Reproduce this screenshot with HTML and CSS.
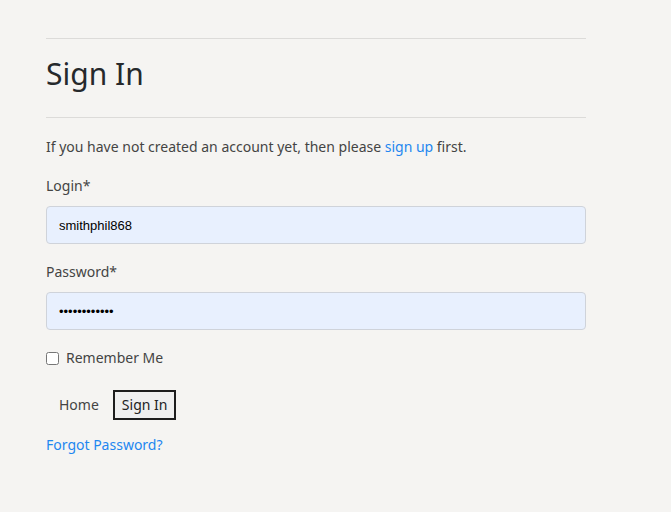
FILE: index.html
```html
<!DOCTYPE html>
<html lang="en">
<head>
<meta charset="utf-8">
<title>Sign In</title>
<link rel="stylesheet" href="styles.css">
</head>
<body>
<main class="wrap">
  <hr class="rule">
  <h1 class="title">Sign In</h1>
  <hr class="rule">
  <p class="intro">If you have not created an account yet, then please <a class="link" href="#">sign up</a> first.</p>
  <form class="form">
    <div class="field">
      <label class="label" for="login">Login*</label>
      <input class="input" id="login" type="text" value="smithphil868">
    </div>
    <div class="field">
      <label class="label" for="password">Password*</label>
      <input class="input" id="password" type="password" value="abcdefghijkl">
    </div>
    <label class="remember"><input class="check" type="checkbox"> Remember Me</label>
    <div class="actions">
      <button class="btn btn-plain" type="button">Home</button>
      <button class="btn btn-primary" type="submit">Sign In</button>
    </div>
    <a class="link forgot" href="#">Forgot Password?</a>
  </form>
</main>
</body>
</html>
```
FILE: styles.css
```css
html, body {
  margin: 0;
  background: #f5f4f2;
}
body {
  font-family: "Noto Sans", sans-serif;
  font-size: 14px;
  line-height: 20px;
  color: #444444;
}
.wrap {
  width: 540px;
  padding: 38px 0 0 46px;
}
.rule {
  margin: 0;
  border: 0;
  border-top: 1px solid #dcdbd9;
  height: 0;
}
.title {
  margin: 17px 0 25px;
  font-size: 30px;
  line-height: 36px;
  font-weight: 400;
  color: #26292c;
}
.intro {
  margin: 19px 0 19px;
}
.link {
  color: #1e87f0;
  text-decoration: none;
}
.form {
  display: flex;
  flex-direction: column;
}
.field {
  display: flex;
  flex-direction: column;
  margin-bottom: 18px;
}
.label {
  margin-bottom: 10px;
}
.input {
  box-sizing: border-box;
  height: 38px;
  padding: 0 12px;
  border: 1px solid #cfd3da;
  border-radius: 4px;
  background: #e8f0fe;
  font-family: "Liberation Sans", Arial, sans-serif;
  font-size: 13px;
  color: #000;
}
.remember {
  display: flex;
  align-items: center;
  gap: 7px;
  height: 20px;
}
.check {
  margin: 0;
  width: 13px;
  height: 13px;
}
.actions {
  display: flex;
  align-items: center;
  gap: 5px;
  margin-top: 22px;
}
.btn {
  font-family: "Noto Sans", sans-serif;
  font-size: 14px;
  line-height: 20px;
  color: #444444;
  cursor: pointer;
}
.btn-plain {
  border: 0;
  background: transparent;
  padding: 5px 9px 5px 13px;
}
.btn-primary {
  border: 2px solid #1d1d1d;
  background: #efefef;
  color: #222;
  padding: 3px 7px;
}
.forgot {
  align-self: flex-start;
  margin-top: 15px;
}
```
